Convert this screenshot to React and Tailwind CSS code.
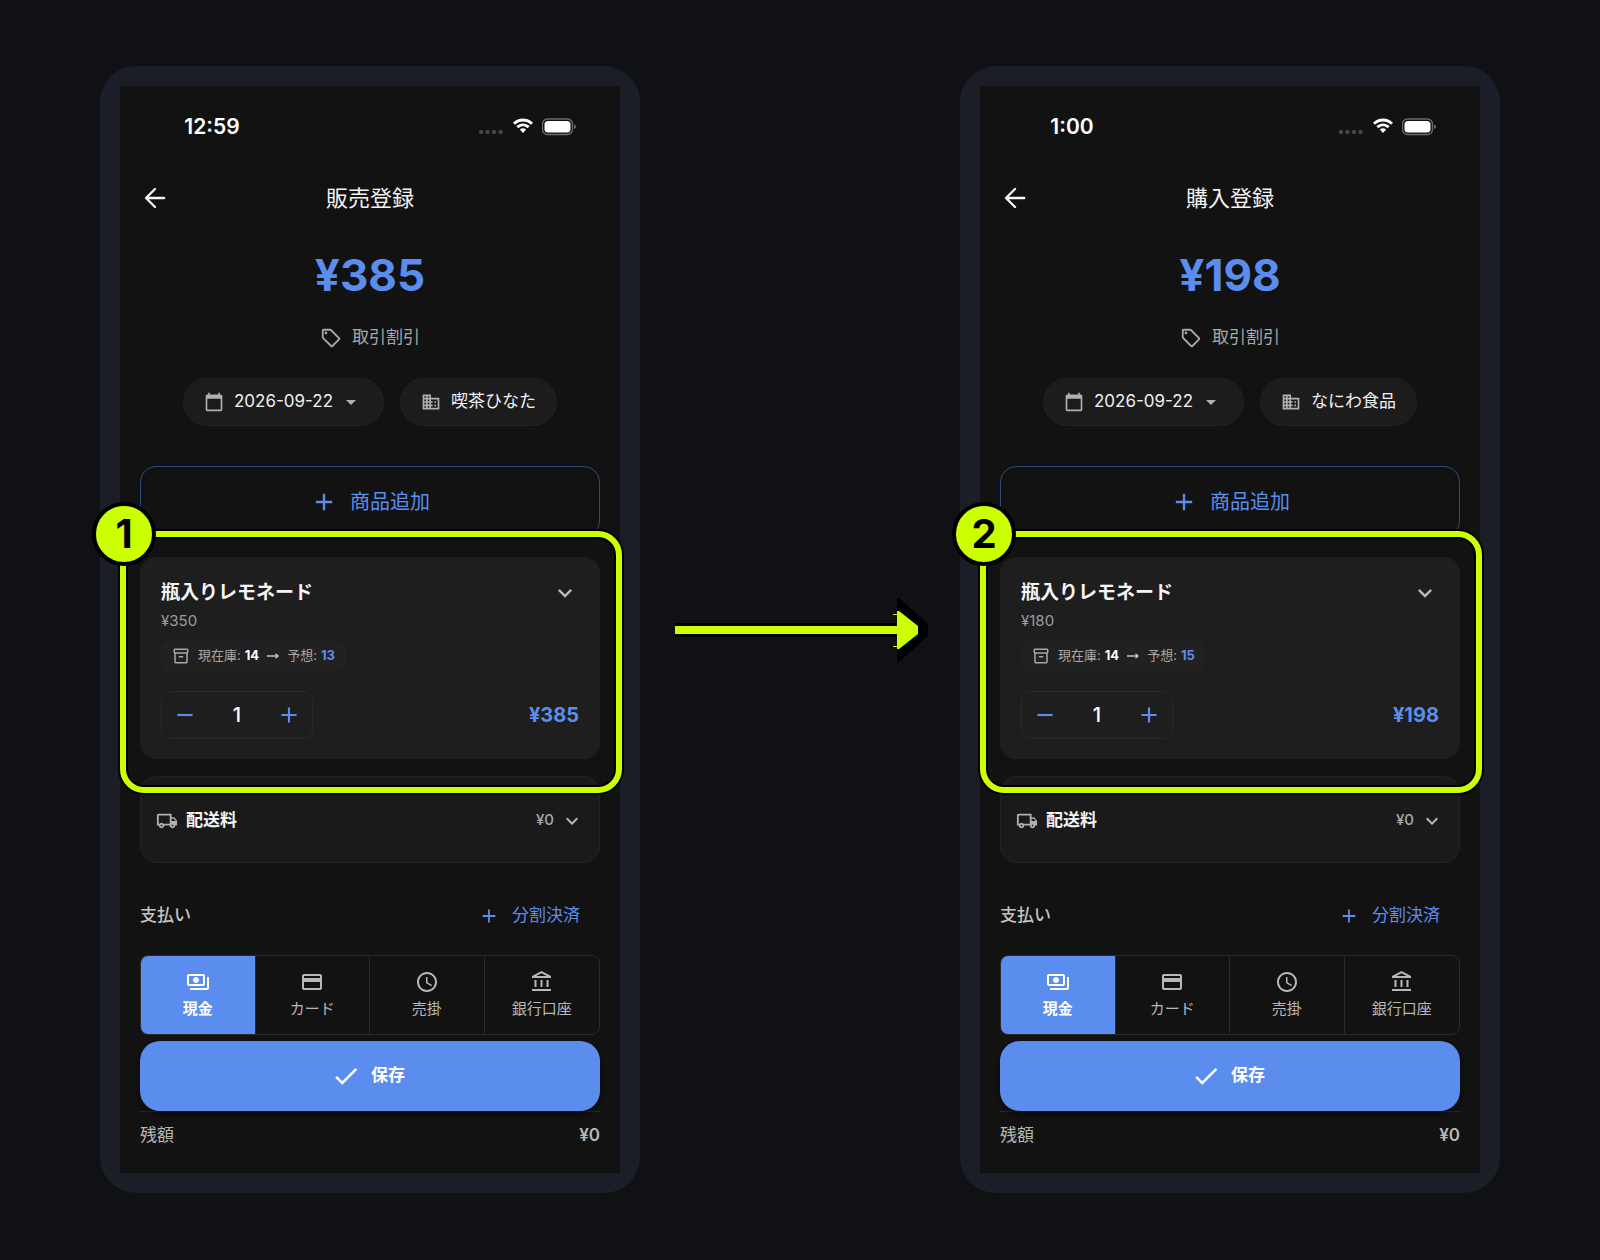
import React, { useState } from "react";
import {
  MdAccessTime,
  MdAdd,
  MdArrowDropDown,
  MdBusiness,
  MdCalendarToday,
  MdCheck,
  MdExpandMore,
  MdOutlineAccountBalance,
  MdOutlineCreditCard,
  MdOutlineInventory2,
  MdOutlineLocalShipping,
  MdOutlinePayments,
  MdOutlineSell,
  MdRemove,
} from "react-icons/md";

const SCREENS = [
  {
    step: 1,
    time: "12:59",
    title: "販売登録",
    total: "¥385",
    date: "2026-09-22",
    partner: "喫茶ひなた",
    unitPrice: "¥350",
    stock: 14,
    forecast: 13,
  },
  {
    step: 2,
    time: "1:00",
    title: "購入登録",
    total: "¥198",
    date: "2026-09-22",
    partner: "なにわ食品",
    unitPrice: "¥180",
    stock: 14,
    forecast: 15,
  },
];

const METHODS = [
  { id: "cash", label: "現金", icon: MdOutlinePayments },
  { id: "card", label: "カード", icon: MdOutlineCreditCard },
  { id: "credit", label: "売掛", icon: MdAccessTime },
  { id: "bank", label: "銀行口座", icon: MdOutlineAccountBalance },
];

const StatusBar = ({ time }) => (
  <div className="flex h-[82px] items-center justify-between pr-11">
    <span className="w-[184px] text-center text-[21px] font-semibold text-white">
      {time}
    </span>
    <div className="flex items-center gap-2">
      {/* No signal */}
      <svg width="25" height="18" viewBox="0 0 25 18" fill="#48484a">
        <rect x="0" y="12" width="4" height="4" rx="1.500" />
        <rect x="6.500" y="12" width="4" height="4" rx="1.500" />
        <rect x="13" y="12" width="4" height="4" rx="1.500" />
        <rect x="19.500" y="12" width="4" height="4" rx="1.500" />
      </svg>
      <svg width="22" height="18" viewBox="0 0 22 18" fill="#fff">
        <path d="M11 3.4c2.9 0 5.600 1.100 7.700 3.100.15.150.4.150.55 0l1.500-1.500c.16-.16.16-.42 0-.58C18.100 1.900 14.700.5 11 .5S3.900 1.900 1.250 4.420c-.16.160-.16.420 0 .58l1.500 1.500c.15.150.4.150.55 0C5.400 4.500 8.100 3.400 11 3.400z" />
        <path d="M11 8.300c1.600 0 3.100.6 4.250 1.650.16.150.4.150.56 0l1.500-1.500c.16-.17.16-.43 0-.6C15.600 6.300 13.400 5.400 11 5.400S6.400 6.300 4.700 7.850c-.17.170-.17.430 0 .6l1.500 1.500c.15.150.4.150.56 0C7.900 8.900 9.400 8.300 11 8.300z" />
        <path d="M13.900 11.800c.16-.16.16-.43-.01-.58C13.100 10.600 12.100 10.200 11 10.200s-2.100.4-2.890 1.020c-.17.150-.18.420-.01.58l2.600 2.900c.16.170.44.170.6 0z" />
      </svg>
      <svg width="34" height="18" viewBox="0 0 34 18">
        <rect
          x="0.5"
          y="1"
          width="30"
          height="15.500"
          rx="5"
          fill="none"
          stroke="#6b6b6b"
          strokeWidth="1.3"
        />
        <rect x="2.500" y="3" width="26" height="11.500" rx="3.500" fill="#fff" />
        <path d="M32 6.500c1.300.5 2 1.300 2 2.300s-.7 1.800-2 2.300z" fill="#6b6b6b" />
      </svg>
    </div>
  </div>
);

const Header = ({ title }) => (
  <header className="grid h-[60px] grid-cols-[1fr_auto_1fr] items-center">
    <button type="button" aria-label="戻る" className="w-[30px]">
      <svg
        width="30"
        height="30"
        viewBox="0 0 24 24"
        fill="none"
        stroke="#f5f5f5"
        strokeWidth="1.9"
        strokeLinecap="round"
        strokeLinejoin="round"
      >
        <path d="M12 4.800 4.800 12l7.200 7.200M5 12h14.300" />
      </svg>
    </button>
    <h1 className="text-[22px] text-[#f2f2f2]">{title}</h1>
  </header>
);

const ItemCard = ({ screen }) => {
  const [count, setCount] = useState(1);

  return (
    <div className="relative z-10 mt-5">
      <section className="rounded-2xl bg-[#1e1e1e] px-[21px] pt-[22px] pb-5">
        <div className="flex h-7 items-center justify-between">
          <h2 className="text-[19px] font-bold text-[#f5f5f5]">
            瓶入りレモネード
          </h2>
          <button type="button" aria-label="詳細" className="text-[#b8b8b8]">
            <MdExpandMore className="h-7 w-7" />
          </button>
        </div>
        <p className="mt-0.5 text-[15px] leading-6 text-[#9c9c9c]">
          {screen.unitPrice}
        </p>

        {/* Stock forecast */}
        <div className="mt-2 inline-flex h-[30px] items-center rounded-lg bg-[#212121] px-[11px] text-[13px] text-[#a8a8a8]">
          <MdOutlineInventory2 className="mr-2 h-[18px] w-[18px]" />
          <span>現在庫:</span>
          <span className="ml-1 font-bold text-white">{screen.stock}</span>
          <svg
            className="mx-2"
            width="12"
            height="8"
            viewBox="0 0 12 8"
            fill="none"
            stroke="#c4c4c4"
            strokeWidth="1.3"
          >
            <path d="M0 4h11M8.500 1.800 11 4 8.500 6.200" />
          </svg>
          <span>予想:</span>
          <span className="ml-1 font-bold text-[#5b8def]">
            {screen.forecast}
          </span>
        </div>

        <div className="mt-5 flex items-center justify-between">
          <div className="flex h-12 w-[152px] items-center justify-between rounded-[10px] border border-[#292929] px-2.5 text-[#5b8def]">
            <button
              type="button"
              aria-label="減らす"
              onClick={() => setCount(Math.max(0, count - 1))}
            >
              <MdRemove className="h-[26px] w-[26px]" />
            </button>
            <span className="text-xl font-medium text-white">{count}</span>
            <button
              type="button"
              aria-label="増やす"
              onClick={() => setCount(count + 1)}
            >
              <MdAdd className="h-[26px] w-[26px]" />
            </button>
          </div>
          <span className="text-xl font-bold text-[#5b8def]">
            {screen.total}
          </span>
        </div>
      </section>

      {/* Callout frame and step number */}
      <div className="pointer-events-none absolute -top-[26px] -right-[22px] -bottom-[34px] -left-5 rounded-3xl border-6 border-[#ccff00] shadow-[0_0_0_2px_#000,inset_0_0_0_2px_#000]" />
      <div className="absolute -top-[55px] -left-12 flex h-16 w-16 items-center justify-center rounded-full border-4 border-black bg-[#ccff00] text-[40px] leading-none font-bold text-black">
        {screen.step}
      </div>
    </div>
  );
};

const PaymentMethods = () => {
  const [method, setMethod] = useState("cash");

  return (
    <div className="mt-[15px] grid h-20 grid-cols-4 divide-x divide-[#2a2a2a] overflow-hidden rounded-lg border border-[#2a2a2a]">
      {METHODS.map(({ id, label, icon: Icon }) => (
        <button
          key={id}
          type="button"
          aria-pressed={method === id}
          onClick={() => setMethod(id)}
          className={`flex flex-col items-center justify-center gap-1 text-[15px] leading-[22px] ${
            method === id
              ? "bg-[#5b8def] font-bold text-white"
              : "text-[#b8b8b8]"
          }`}
        >
          <Icon className="h-6 w-6" />
          {label}
        </button>
      ))}
    </div>
  );
};

const Phone = ({ screen }) => (
  <article className="min-w-0 flex-1 rounded-[36px] bg-[#1b1e26] p-5">
    <div className="bg-[#121212]">
      <StatusBar time={screen.time} />
      <div className="px-5">
        <Header title={screen.title} />

        <p className="mt-[19px] text-center text-[44px] leading-[56px] font-bold text-[#5b8def]">
          {screen.total}
        </p>
        <button
          type="button"
          className="mx-auto mt-[23px] flex h-6 items-center gap-2.5 text-[17px] text-[#a8a8a8]"
        >
          <MdOutlineSell className="h-[22px] w-[22px]" />
          取引割引
        </button>

        <div className="mt-7 flex justify-center gap-4 text-[17px] text-[#f0f0f0]">
          <button
            type="button"
            className="flex h-12 items-center rounded-full border border-[#222] bg-[#1c1c1c] px-5"
          >
            <MdCalendarToday className="mr-2.5 h-5 w-5 text-[#b0b0b0]" />
            {screen.date}
            <MdArrowDropDown className="ml-1.5 h-6 w-6 text-[#b0b0b0]" />
          </button>
          <button
            type="button"
            className="flex h-12 items-center rounded-full border border-[#222] bg-[#1c1c1c] px-5"
          >
            <MdBusiness className="mr-2.5 h-5 w-5 text-[#b0b0b0]" />
            {screen.partner}
          </button>
        </div>

        <button
          type="button"
          className="mt-10 flex h-[71px] w-full items-center justify-center gap-3 rounded-2xl border border-[#304b80] text-xl text-[#5b8def]"
        >
          <MdAdd className="h-7 w-7" />
          商品追加
        </button>

        <ItemCard screen={screen} />

        <section className="mt-[17px] flex h-[87px] items-center rounded-2xl border border-[#222] bg-[#1a1a1a] px-[15px] pt-0.5">
          <MdOutlineLocalShipping className="mr-2 h-[22px] w-[22px] text-[#b0b0b0]" />
          <h2 className="flex-1 text-[17px] font-bold text-[#f5f5f5]">
            配送料
          </h2>
          <span className="text-[15px] font-medium text-[#a8a8a8]">¥0</span>
          <button type="button" aria-label="開く" className="ml-1.5 text-[#b8b8b8]">
            <MdExpandMore className="h-6 w-6" />
          </button>
        </section>

        <div className="mt-[29px] flex h-12 items-center justify-between text-[17px]">
          <h2 className="font-medium text-[#c4c4c4]">支払い</h2>
          <button
            type="button"
            className="flex items-center gap-3 pr-5 text-[#5b8def]"
          >
            <MdAdd className="h-[22px] w-[22px]" />
            分割決済
          </button>
        </div>

        <PaymentMethods />

        <button
          type="button"
          className="relative mt-1.5 flex h-[70px] w-full items-center justify-center gap-2.5 rounded-[20px] bg-[#5b8def] pr-1 text-[17px] font-bold text-white shadow-md shadow-black/50"
        >
          <MdCheck className="h-[30px] w-[30px]" />
          保存
        </button>
        <div className="flex h-[62px] items-start justify-between border-t border-[#2a2a2a] pt-[11px] text-[17px] leading-6 text-[#b8b8b8]">
          <span>残額</span>
          <span className="font-semibold">¥0</span>
        </div>
      </div>
    </div>
  </article>
);

const StepArrow = () => (
  <svg
    className="w-80 shrink-0"
    height="80"
    viewBox="0 0 320 80"
    aria-hidden="true"
  >
    <path
      fill="#000"
      d="M35 33h222V24h-7v-1h7V8h2l29 26v12L259 72h-2V57h-7v-1h7V47H35z"
    />
    <path
      fill="#ccff00"
      d="M35 36h222V25h-4v-1h4V21h2l19 15v8L259 59h-2V57h-4v-1h4V44H35z"
    />
  </svg>
);

const App = () => (
  <main className="min-h-screen bg-[#101115] px-[100px] py-[66px] font-['Inter','Noto_Sans_CJK_JP',sans-serif]">
    <div className="flex items-center">
      <Phone screen={SCREENS[0]} />
      <StepArrow />
      <Phone screen={SCREENS[1]} />
    </div>
  </main>
);

export default App;
